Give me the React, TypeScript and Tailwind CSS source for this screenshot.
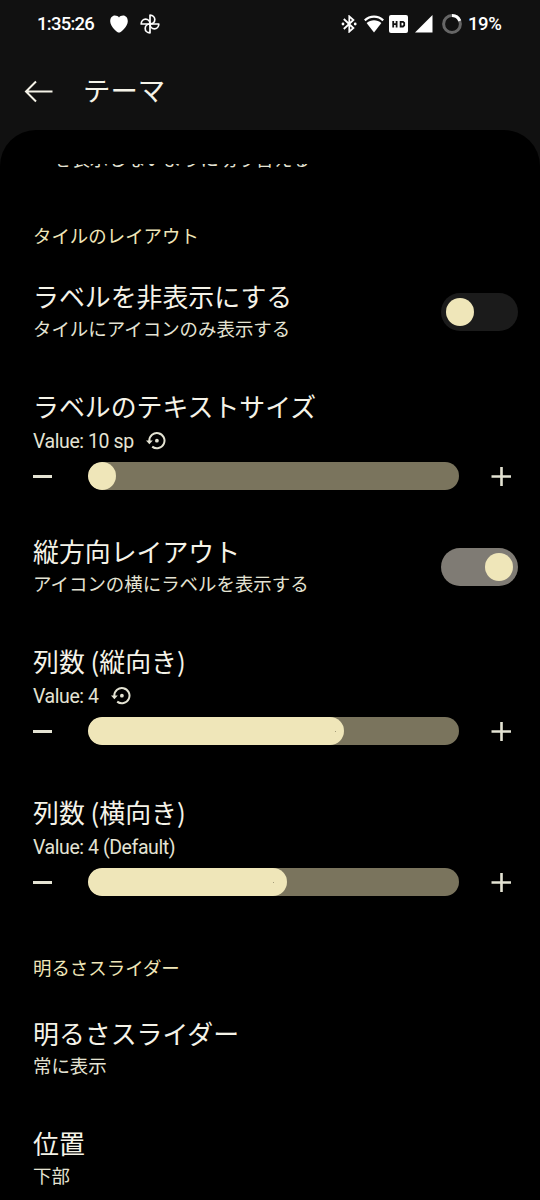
import React from 'react';

const StatusBar: React.FC = () => {
  return (
    <div className="flex h-12 items-center pl-[37px] pr-[38px] font-['Roboto',sans-serif] text-[18.5px] font-medium text-white">
      <span className="w-[72px] whitespace-nowrap leading-6 tracking-[-0.75px]">1:35:26</span>
      <svg className="h-5 w-5 shrink-0" viewBox="0 0 20 20" fill="currentColor">
        <path d="M10 18.6C8.4 18.6 1.2 12.6 1.2 7.2C1.2 3.8 3.3 1.6 5.8 1.6C7.8 1.6 9.2 2.4 10 3.4C10.8 2.4 12.2 1.6 14.2 1.6C16.7 1.6 18.8 3.8 18.8 7.2C18.8 12.6 11.6 18.6 10 18.6Z" />
      </svg>
      <svg
        className="ml-[11px] h-5 w-5 shrink-0"
        viewBox="0 0 20 20"
        fill="none"
        stroke="currentColor"
        strokeWidth="1.7"
        strokeLinejoin="round"
      >
        {[0, 90, 180, 270].map((angle) => (
          <path key={angle} d="M10 10V1.2C13 1.2 14.8 3.2 14.8 5.6C14.8 8 13 10 10 10Z" transform={`rotate(${angle} 10 10)`} />
        ))}
      </svg>

      <div className="ml-auto flex items-center">
        <svg className="h-[18px] w-4" viewBox="0 0 16 18" fill="none" stroke="currentColor" strokeWidth="1.8">
          <path d="M2.8 4L12.4 13L8.3 16.6V1.4L12.4 5L2.8 14" />
          <circle cx="2" cy="9" r="1.4" fill="currentColor" stroke="none" />
          <circle cx="14.2" cy="9" r="1.4" fill="currentColor" stroke="none" />
        </svg>
        <svg className="ml-[7px] h-[18px] w-5" viewBox="0 0 20 18" fill="none">
          <path d="M0.8 5.4C6 0.4 14 0.4 19.2 5.4" stroke="currentColor" strokeWidth="2.2" />
          <path d="M2.6 8C7 4.2 13 4.2 17.4 8L10 17.4Z" fill="currentColor" />
        </svg>
        <svg className="ml-[5px] h-[18px] w-[19px]" viewBox="0 0 19 18" fill="none">
          <rect width="19" height="18" rx="2" fill="currentColor" />
          <path d="M4.2 6V12.4M7.6 6V12.4M4.2 9.2H7.6M11.6 6.9H14L15.2 8V10.4L14 11.5H11.6Z" stroke="#111111" strokeWidth="1.8" />
        </svg>
        <svg className="ml-[7px] h-[18px] w-[18px]" viewBox="0 0 18 18" fill="currentColor">
          <path d="M17.5 0V17.5H0Z" />
        </svg>
        <svg className="ml-[9px] h-5 w-5" viewBox="0 0 20 20" fill="none" strokeWidth="3">
          <circle cx="10" cy="10" r="8.4" stroke="#666666" />
          <path d="M10 1.6A8.4 8.4 0 0 1 17.8 6.9" stroke="currentColor" />
        </svg>
        <span className="ml-[6px] w-[34px] whitespace-nowrap leading-6 tracking-[-0.4px]">19%</span>
      </div>
    </div>
  );
};

const RestoreIcon: React.FC = () => {
  return (
    <svg className="h-5 w-5" viewBox="0 0 20 20" fill="none">
      <path d="M3.3 10.5V9.8A7.6 7.6 0 1 1 6.2 15.6" stroke="currentColor" strokeWidth="2" />
      <path d="M0 9.5H6.8L3.4 13.2Z" fill="currentColor" />
      <circle cx="10.9" cy="9.7" r="1.9" fill="currentColor" />
    </svg>
  );
};

interface TextProps {
  children: React.ReactNode;
}

const SectionTitle: React.FC<TextProps> = ({ children }) => (
  <h2 className="text-[18.45px] leading-6 text-[#f0e6b8]">{children}</h2>
);

interface PreferenceProps {
  title: string;
  summary: string;
  checked?: boolean;
}

const Preference: React.FC<PreferenceProps> = ({ title, summary, checked }) => {
  return (
    <div className="flex h-16 items-center justify-between">
      <div className="whitespace-nowrap">
        <p className="text-[25.9px] leading-8 text-[#f5f3e8]">{title}</p>
        <p className="text-[18.45px] leading-8 text-[#e4e3d3]">{summary}</p>
      </div>
      {checked !== undefined && (
        <div
          className={
            checked
              ? 'flex h-[38.5px] w-[77px] items-center justify-end rounded-full bg-[#7f7b74] px-[5px]'
              : 'flex h-[38.5px] w-[77px] items-center rounded-full bg-[#1b1b1b] px-[5px]'
          }
        >
          <div className="h-7 w-7 rounded-full bg-[#efe6b9]" />
        </div>
      )}
    </div>
  );
};

interface SliderPreferenceProps {
  title: string;
  value: string;
  width: number;
  tick?: number;
  resettable?: boolean;
}

const SliderPreference: React.FC<SliderPreferenceProps> = ({ title, value, width, tick, resettable }) => {
  return (
    <div className="h-[100px] text-[#e4e3d3]">
      <p className="text-[25.9px] leading-8 text-[#f5f3e8]">{title}</p>
      <div className="flex h-10 items-center gap-3">
        <span className="font-['Roboto',sans-serif] text-[19.5px] leading-6 tracking-[-0.42px]">{value}</span>
        {resettable && (
          <div className="pb-[2px]">
            <RestoreIcon />
          </div>
        )}
      </div>
      <div className="flex h-7 items-center">
        <div className="h-[3px] w-[19px] bg-current" />
        <div className="ml-9 h-[27.5px] w-[371px] overflow-hidden rounded-full bg-[#7a745d]">
          <div className="flex h-full items-center rounded-full bg-[#efe6b9]" style={{ width }}>
            {tick !== undefined && <div className="h-px w-px bg-[#a59e7c]" style={{ marginLeft: tick }} />}
          </div>
        </div>
        <svg className="ml-8 h-5 w-5" viewBox="0 0 20 20" stroke="currentColor" strokeWidth="2.6">
          <path d="M0.5 10.5H20M10.5 1V20" />
        </svg>
      </div>
    </div>
  );
};

export default function App() {
  return (
    <div className="h-[1200px] w-[540px] overflow-hidden bg-[#111111] font-['Noto_Sans_CJK_JP',sans-serif]" lang="ja">
      <StatusBar />

      <header className="flex h-[82px] items-center pl-6 text-[#f5f3e8]">
        <svg className="mt-1 h-6 w-[29px]" viewBox="0 0 29 24" fill="none" stroke="currentColor" strokeWidth="2">
          <path d="M28.5 12.5H2M12 2.5L2 12.5L12 22.5" />
        </svg>
        <h1 className="ml-[30px] text-[27.4px] leading-10">テーマ</h1>
      </header>

      <main className="flex h-[1070px] flex-col rounded-t-[36px] bg-black pl-[33px] pr-[22px] pt-[34px]">
        {/* tail of the summary that is scrolled under the header */}
        <div className="flex h-[6px] shrink-0 flex-col justify-end overflow-hidden pl-5">
          <p className="shrink-0 text-[18.45px] leading-6 text-[#e4e3d3]">を表示しないように切り替える</p>
        </div>

        <section className="mt-[53px] shrink-0">
          <SectionTitle>タイルのレイアウト</SectionTitle>
          <div className="mt-[33px]">
            <Preference title="ラベルを非表示にする" summary="タイルにアイコンのみ表示する" checked={false} />
          </div>
          <div className="mt-[46px]">
            <SliderPreference title="ラベルのテキストサイズ" value="Value: 10 sp" width={27.5} resettable />
          </div>
          <div className="mt-[45px]">
            <Preference title="縦方向レイアウト" summary="アイコンの横にラベルを表示する" checked />
          </div>
          <div className="mt-[46px]">
            <SliderPreference title="列数 (縦向き)" value="Value: 4" width={256} tick={247} resettable />
          </div>
          <div className="mt-[51px]">
            <SliderPreference title="列数 (横向き)" value="Value: 4 (Default)" width={199} tick={185} />
          </div>
        </section>

        <section className="mt-[59px] shrink-0">
          <SectionTitle>明るさスライダー</SectionTitle>
          <div className="mt-[38px] flex flex-col gap-[46px]">
            <Preference title="明るさスライダー" summary="常に表示" />
            <Preference title="位置" summary="下部" />
          </div>
        </section>
      </main>
    </div>
  );
}
